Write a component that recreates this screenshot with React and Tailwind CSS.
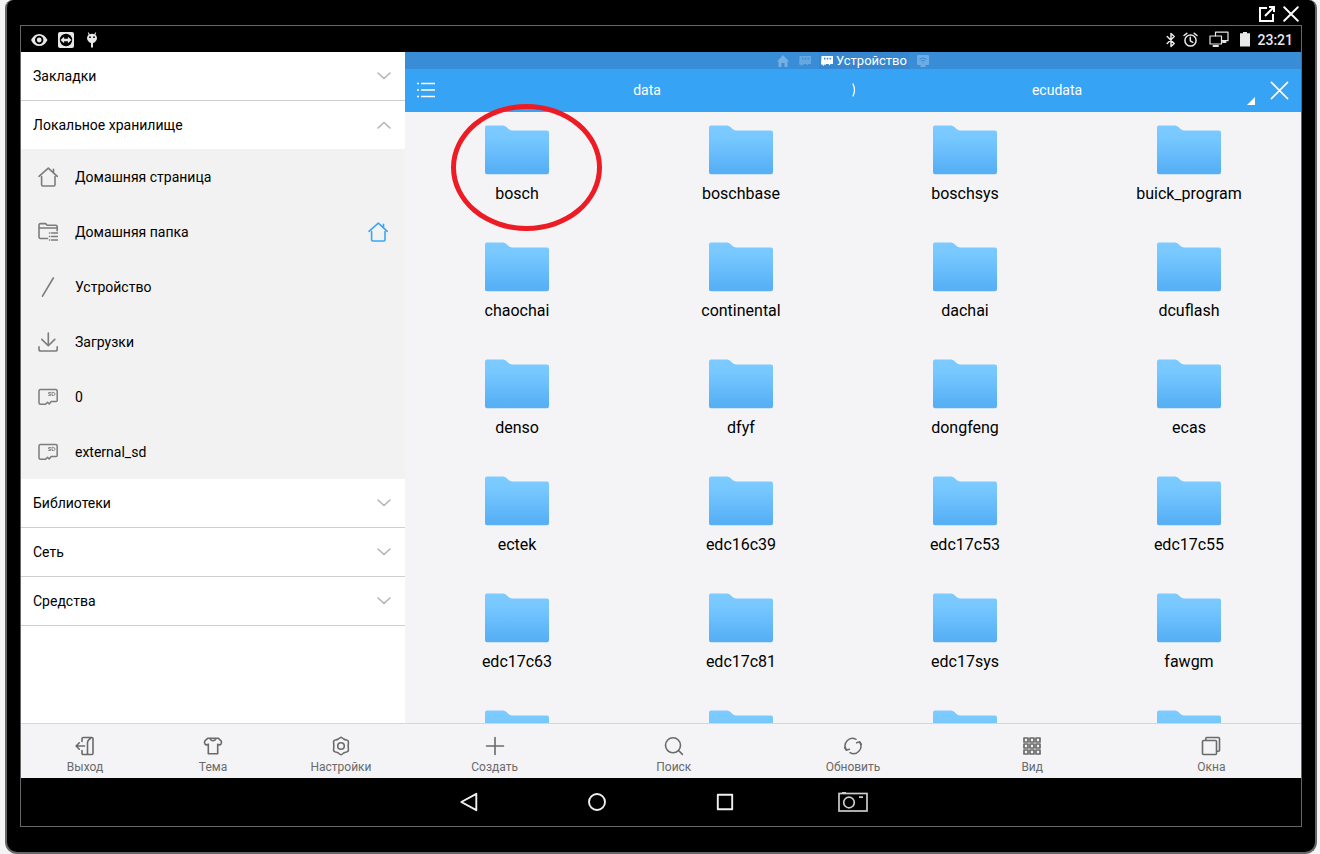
import React from "react";

const strokeProps = { fill: "none", stroke: "currentColor", strokeLinecap: "round", strokeLinejoin: "round" };

function Icon({ size = 20, width = 1.6, className = "", children }) {
  return (
    <svg aria-hidden="true" width={size} height={size} viewBox="0 0 20 20" strokeWidth={width} className={`shrink-0 ${className}`} {...strokeProps}>
      {children}
    </svg>
  );
}

const HomeIcon = ({ className }) => (
  <Icon className={className}>
    <path d="M1 9.3 10.3 1.2 19.3 9.3M15.5 5.5V2.2M3.6 9.5v8.3q0 1.2 1.2 1.2h11q1.2 0 1.2-1.2V9.5" />
  </Icon>
);

const HomeFolderIcon = () => (
  <Icon>
    <path d="M9.5 16.5H2.4Q1 16.5 1 15.1V3Q1 1.6 2.4 1.6h5.2l1.6 1.7h8.6q1.4 0 1.4 1.4v4M1 6h18.2" />
    <path d="M13.5 11h6M13.5 14.5h6M13.5 18h6M11.5 11h.1M11.5 14.5h.1M11.5 18h.1" />
  </Icon>
);

const SlashIcon = () => (
  <Icon>
    <path d="M15.3 1 4.5 19.2" />
  </Icon>
);

const DownloadIcon = () => (
  <Icon>
    <path d="M10.3 1v12.6M3.8 7.4l6.5 6.3 6.5-6.3M1 14.8v2.4Q1 19 2.8 19h14.6q1.8 0 1.8-1.8v-2.4" />
  </Icon>
);

const CardIcon = () => (
  <Icon width={1.5}>
    <path d="M2.5 2.5h15.2q1.5 0 1.5 1.500V13.600q0 1-1 1h-5l-2 2.400-1.700-1.800L7.600 17.200H2.500Q1 17.200 1 15.700V4q0-1.500 1.500-1.500Z" />
    <path strokeWidth=".9" d="M12.500 5.500h-1.800v1.500h1.800v1.500h-1.800M14 5.500v3h1.500q1.500 0 1.500-1.500t-1.500-1.500Z" />
  </Icon>
);

const ExitIcon = () => (
  <Icon>
    <path d="M7 5.500V2.800Q7 1.500 8.300 1.500h8.400Q18 1.500 18 2.800v14.400q0 1.300-1.300 1.300H8.300Q7 18.500 7 17.200v-2.700M12.500 18.300V6.800q0-1.800 1.300-3l2.200-2M9.500 10H1.300M4.300 6.800 1.100 10l3.200 3.200" />
  </Icon>
);

const ShirtIcon = () => (
  <Icon>
    <path d="M6.800 2.200H4.900L1.900 4.900Q1 6.200 2 8q.8 1.200 2 .7l1.300-.5v9.600h9.400V8.200l1.300.5q1.200.5 2-.7 1-1.800.1-3.100l-3-2.700h-1.900q-1 2.500-3.200 2.500T6.800 2.200Zm0 0h6.400" />
  </Icon>
);

const SettingsIcon = () => (
  <Icon>
    <path d="M10 1.200Q10.500 1.200 12.700 3q1.200.8 2.800 1 1.800.3 1.900 1.600.1 1-.1 2.200-.3 2.200 0 4.400.2 1.200.1 2.200-.1 1.300-1.900 1.600-1.600.2-2.800 1Q10.500 18.800 10 18.800T7.300 17q-1.200-.8-2.800-1-1.800-.3-1.900-1.600-.1-1 .1-2.200.3-2.200 0-4.400-.2-1.200-.1-2.200Q2.700 4.300 4.500 4q1.600-.2 2.800-1Q9.500 1.200 10 1.200Z" />
    <circle cx="10" cy="10" r="3.3" />
  </Icon>
);

const PlusIcon = () => (
  <Icon>
    <path d="M10 1.500v17M1.500 10h17" />
  </Icon>
);

const SearchIcon = () => (
  <Icon>
    <circle cx="9" cy="9.3" r="7.5" />
    <path d="m14.800 14.800 3.600 3.600" />
  </Icon>
);

const RefreshIcon = () => (
  <Icon width={1.5}>
    <path d="M3.300 13.600A7.300 7.300 0 0 1 13 3.300M16.700 6.400A7.300 7.300 0 0 1 7 16.700" />
    <path d="m13.600 6.700 3.200-.9 1.600 2.600M6.400 13.300l-3.200.9-1.600-2.600" />
  </Icon>
);

const GridIcon = () => (
  <Icon width={1.7}>
    {[2, 8, 14].map((y) => [2, 8, 14].map((x) => <rect key={`${x}-${y}`} x={x} y={y} width="4" height="4" />))}
  </Icon>
);

const WindowsIcon = () => (
  <Icon>
    <rect x="1.5" y="4.5" width="14" height="14" rx="1" />
    <path d="M4.800 4.300V2.500q0-1 1-1h11.700q1 0 1 1v11.700q0 1-1 1h-1.800" />
  </Icon>
);

const CloseIcon = ({ size, width }) => (
  <Icon size={size} width={width}>
    <path d="m1.500 1.500 17 17M18.500 1.500l-17 17" />
  </Icon>
);

const Chevron = ({ open }) => (
  <svg aria-hidden="true" width="14" height="8" viewBox="0 0 14 8" strokeWidth="1.6" className="shrink-0 text-[#b4b4b4]" {...strokeProps}>
    <path d={open ? "M1 7l6-5.500L13 7" : "M1 1l6 5.500L13 1"} />
  </svg>
);

const Storage = ({ className = "" }) => (
  <svg aria-hidden="true" width="12" height="12" viewBox="0 0 12 12" className={className}>
    <path fill="currentColor" fillRule="evenodd" d="M1 1h11v8H9.500L8.500 10.500 7.500 9H5L4 10.500 3 9v2L1.500 10V9.500H0L.5 1ZM3 2.800v1.700h1.500V2.800ZM5.800 2.800v1.700h1.500V2.800ZM8.600 2.800v1.700h1.500V2.800Z" />
  </svg>
);

function Folder() {
  return (
    <svg aria-hidden="true" width="64" height="50" viewBox="0 0 64 50" className="shrink-0">
      <defs>
        <linearGradient id="folder-fill" x1="0" y1="0" x2="0" y2="1">
          <stop offset="0" stopColor="#7dcbff" />
          <stop offset="0.25" stopColor="#77c8ff" />
          <stop offset="0.9" stopColor="#58b1f6" />
          <stop offset="1" stopColor="#59aff2" />
        </linearGradient>
      </defs>
      <path fill="url(#folder-fill)" d="M2 .6h16q2 0 3.500 1.500l2 2Q25 5.400 27 5.400h35q2 0 2 2V47.200q0 2-2 2H2q-2 0-2-2V2.600Q0 .6 2 .6Z" />
    </svg>
  );
}

const places = [
  { label: "Домашняя страница", icon: <HomeIcon /> },
  { label: "Домашняя папка", icon: <HomeFolderIcon />, home: true },
  { label: "Устройство", icon: <SlashIcon /> },
  { label: "Загрузки", icon: <DownloadIcon /> },
  { label: "0", icon: <CardIcon /> },
  { label: "external_sd", icon: <CardIcon /> },
];

const sideActions = [
  { label: "Выход", icon: <ExitIcon /> },
  { label: "Тема", icon: <ShirtIcon /> },
  { label: "Настройки", icon: <SettingsIcon /> },
];

const fileActions = [
  { label: "Создать", icon: <PlusIcon /> },
  { label: "Поиск", icon: <SearchIcon /> },
  { label: "Обновить", icon: <RefreshIcon /> },
  { label: "Вид", icon: <GridIcon /> },
  { label: "Окна", icon: <WindowsIcon /> },
];

const folders = [
  "bosch", "boschbase", "boschsys", "buick_program",
  "chaochai", "continental", "dachai", "dcuflash",
  "denso", "dfyf", "dongfeng", "ecas",
  "ectek", "edc16c39", "edc17c53", "edc17c55",
  "edc17c63", "edc17c81", "edc17sys", "fawgm",
  "", "", "", "",
];

function Section({ label, open = false }) {
  return (
    <button type="button" aria-expanded={open} className={`flex w-full shrink-0 items-center justify-between bg-white pr-[14px] pl-3 text-left text-sm text-black ${open ? "h-12" : "h-[49px] border-b border-[#cfcfcf]"}`}>
      {label}
      <Chevron open={open} />
    </button>
  );
}

function ActionBar({ actions }) {
  return (
    <div className="flex h-[55px] shrink-0 border-t border-[#d6d7da] bg-[#f4f4f7]">
      {actions.map(({ label, icon }) => (
        <button key={label} type="button" className="flex flex-1 basis-0 flex-col items-center gap-[3px] pt-3 text-xs leading-4 text-[#6a6a6a]">
          {icon}
          {label}
        </button>
      ))}
    </div>
  );
}

function StatusBar() {
  return (
    <div className="flex h-[26px] shrink-0 items-center justify-between bg-black pt-[2px] pr-2 pl-[9px] text-[#e8e8e8]">
      <div className="flex items-center gap-[9px]">
        <svg aria-hidden="true" width="18" height="14" viewBox="0 0 18 14">
          <path fill="currentColor" fillRule="evenodd" d="M1 7Q4 1 9.200 1T17.500 7Q14.500 13 9.200 13T1 7Zm8.200-4.200a4.200 4.200 0 1 0 0 8.400 4.200 4.200 0 0 0 0-8.400Zm0 1.800a2.400 2.400 0 1 1 0 4.800 2.400 2.400 0 0 1 0-4.800Z" />
        </svg>
        <svg aria-hidden="true" width="18" height="18" viewBox="0 0 18 18">
          <rect x="1" y="1" width="16" height="16" rx="2" fill="currentColor" />
          <circle cx="9" cy="9" r="6.200" fill="#000" />
          <path fill="currentColor" d="m3.500 9 3.600-3.200v2h3.800v-2L14.500 9l-3.600 3.200v-2H7.100v2Z" />
        </svg>
        <svg aria-hidden="true" width="16" height="18" viewBox="0 0 16 18">
          <path fill="currentColor" d="M3.800 1.500h1l.9 1.700q2.300-.8 4.600 0l.9-1.700h1l-.8 2.200Q13 5 13 7.200 13 9.500 11 11q-1 .8-2 1v4.500H7V12q-1-.2-2-1-2-1.500-2-3.800Q3 5 4.600 3.700Z" />
          <circle cx="6" cy="6.200" r=".9" fill="#000" />
          <circle cx="10" cy="6.200" r=".9" fill="#000" />
        </svg>
      </div>
      <div className="flex items-center gap-[7px]">
        <svg aria-hidden="true" width="10" height="16" viewBox="0 0 10 16" strokeWidth="1.500" {...strokeProps}>
          <path d="m1.200 4.500 7 7L5 14.500v-13l3.200 3-7 7" />
        </svg>
        <svg aria-hidden="true" width="15" height="16" viewBox="0 0 15 16" strokeWidth="1.500" {...strokeProps}>
          <circle cx="7.500" cy="8.500" r="5.600" />
          <path d="M7.300 5.300v3.500l2.400 1.500M1 3.500 3.800 1.300M14 3.500l-2.800-2.200" />
        </svg>
        <svg aria-hidden="true" width="20" height="18" viewBox="0 0 20 18" strokeWidth="1.200" {...strokeProps} className="ml-1">
          <path d="M6.500 5V1.200h12.500v8.500h-6.500" />
          <rect x="1" y="5" width="11.500" height="8" />
          <path strokeWidth="2" d="M4.500 15h4.500M14 11h2.500" />
        </svg>
        <svg aria-hidden="true" width="10" height="16" viewBox="0 0 10 16" className="ml-1">
          <path fill="currentColor" d="M3 0h4v1.200h3V14.500H0V1.200h3Z" />
        </svg>
        <span className="text-sm font-medium">23:21</span>
      </div>
    </div>
  );
}

function Sidebar() {
  return (
    <aside className="flex w-[30%] shrink-0 flex-col bg-white">
      <nav className="flex min-h-0 flex-1 flex-col overflow-hidden">
        <Section label="Закладки" />
        <Section label="Локальное хранилище" open />
        <ul className="bg-[#f2f2f2]">
          {places.map(({ label, icon, home }) => (
            <li key={label} className="flex h-[55px] items-center px-[17px] text-[#7c7c7c]">
              <a href="#" className="flex flex-1 items-center gap-[17px]">
                {icon}
                <span className="text-sm text-black">{label}</span>
              </a>
              {home && <HomeIcon className="text-[#3ba6f5]" />}
            </li>
          ))}
        </ul>
        <Section label="Библиотеки" />
        <Section label="Сеть" />
        <Section label="Средства" />
      </nav>
      <ActionBar actions={sideActions} />
    </aside>
  );
}

function Browser() {
  return (
    <main className="relative flex min-w-0 flex-1 flex-col bg-[#f4f4f7]">
      <div className="flex h-[17px] shrink-0 items-center justify-center bg-[#398dd6] text-[13px] leading-[17px] text-white">
        <svg aria-hidden="true" width="12" height="12" viewBox="0 0 12 12" className="mr-[10px] text-[#75b0e4]">
          <path fill="currentColor" d="M6 0 0 6.500h1.500V12h3V8h3v4h3V6.500H12Z" />
        </svg>
        <Storage className="mr-2 text-[#65a7e0]" />
        <span className="flex items-center gap-[3px] bg-[#3687cf] px-[2px]">
          <Storage />
          Устройство
        </span>
        <svg aria-hidden="true" width="12" height="12" viewBox="0 0 12 12" className="ml-2 text-[#6bade4]">
          <path fill="currentColor" d="M1 0h10q1 0 1 1v8q0 1-1 1H8l1 2H3l1-2H1q-1 0-1-1V1q0-1 1-1Z" />
          <path fill="none" stroke="#398dd6" d="M2.500 4.200Q6 1.500 9.500 4.200M4 6q2-1.500 4 0M6 7.300v1" />
        </svg>
      </div>
      <div className="flex h-[43px] shrink-0 items-center bg-[#36a3f5] pb-px text-sm text-white">
        <button type="button" aria-label="Меню" className="flex h-full w-11 items-center pl-3">
          <svg aria-hidden="true" width="18" height="16" viewBox="0 0 18 16" strokeWidth="1.300" fill="none" stroke="currentColor">
            <path d="M0 1.500h2M4 1.500h14M0 8h2M4 8h14M0 14.500h2M4 14.500h14" />
          </svg>
        </button>
        <a href="#data" className="flex-1 basis-0 text-center">data</a>
        <svg aria-hidden="true" width="14" height="14" viewBox="0 0 14 14" strokeWidth="1.300" {...strokeProps}>
          <path d="M8 1q3 6 0 12" />
        </svg>
        <a href="#ecudata" className="relative flex h-full flex-1 basis-0 items-center justify-center">
          ecudata
          <svg aria-hidden="true" width="8" height="8" viewBox="0 0 8 8" className="absolute right-0 bottom-[6px]">
            <path fill="currentColor" d="M8 0v8H0Z" />
          </svg>
        </a>
        <button type="button" aria-label="Закрыть папку" className="flex h-full w-[46px] items-center justify-end pr-3">
          <CloseIcon size={19} width={1.7} />
        </button>
      </div>
      <ul className="grid min-h-0 flex-1 auto-rows-[117px] grid-cols-4 overflow-hidden">
        {folders.map((name, i) => (
          <li key={i}>
            <a href="#" aria-label={name || "folder"} className="flex flex-col items-center gap-[7px] pt-[13px] text-base leading-6 text-black">
              <Folder />
              {name}
            </a>
          </li>
        ))}
      </ul>
      <ActionBar actions={fileActions} />
      <div className="pointer-events-none absolute top-[52px] left-[46px] h-[127px] w-[151px] rounded-[50%] border-5 border-[#ed1c24]" />
    </main>
  );
}

function NavBar() {
  const button = "flex h-full w-32 items-center justify-center";
  return (
    <div className="flex h-12 shrink-0 justify-center bg-black text-[#f0f0f0]">
      <button type="button" aria-label="Назад" className={button}>
        <Icon width={1.9}><path d="M17.300 1.800v16.400L2.300 10Z" /></Icon>
      </button>
      <button type="button" aria-label="Домой" className={button}>
        <Icon width={1.9}><circle cx="10" cy="10" r="8" /></Icon>
      </button>
      <button type="button" aria-label="Недавние" className={button}>
        <Icon width={1.9}><rect x="2.800" y="2.800" width="14.400" height="14.400" /></Icon>
      </button>
      <button type="button" aria-label="Снимок экрана" className={button}>
        <svg aria-hidden="true" width="30" height="20" viewBox="0 0 30 20" fill="none" stroke="#ccc" strokeWidth="1.700">
          <rect x="1" y="1.500" width="28" height="17.500" />
          <circle cx="11" cy="10.500" r="5.300" />
          <path d="M21 5.200h4M4 .8h4" />
        </svg>
      </button>
    </div>
  );
}

export default function App() {
  return (
    <div className="h-screen overflow-hidden bg-[#f4f4f4] pr-[3px] pl-[5px] font-[Roboto,'Noto_Sans',sans-serif]">
      <div className="flex h-full flex-col rounded-t-lg rounded-b-xl border-x-2 border-b-2 border-[#666] bg-black px-[13px] pb-[25px]">
        <div className="flex h-[25px] shrink-0 items-center justify-end gap-[7px] pt-[3px] pr-[3px] text-white">
          <button type="button" aria-label="Открыть в новом окне">
            <svg aria-hidden="true" width="18" height="18" viewBox="0 0 18 18" strokeWidth="2" fill="none" stroke="currentColor">
              <path d="M9 3H2v13h13V9M7 11l8.500-8.500M11 2h5v5" />
            </svg>
          </button>
          <button type="button" aria-label="Закрыть">
            <CloseIcon size={16} width={2.4} />
          </button>
        </div>
        <div className="flex min-h-0 flex-1 flex-col overflow-hidden border border-[#666]">
          <StatusBar />
          <div className="flex min-h-0 flex-1">
            <Sidebar />
            <Browser />
          </div>
          <NavBar />
        </div>
      </div>
    </div>
  );
}
